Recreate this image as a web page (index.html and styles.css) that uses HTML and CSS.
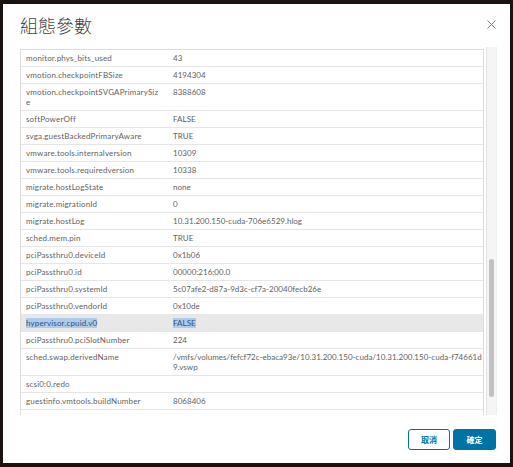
FILE: index.html
```html
<!DOCTYPE html>
<html lang="zh-Hant">
<head>
<meta charset="utf-8">
<title>組態參數</title>
<link rel="stylesheet" href="styles.css">
</head>
<body>
<div class="modal">
  <div class="header">
    <h1 class="title">組態參數</h1>
    <button class="close" aria-label="close">
      <svg width="9" height="9" viewBox="0 0 9 9"><path d="M0.5 0.5 L8.5 8.5 M8.5 0.5 L0.5 8.5" stroke="#7a7a7a" stroke-width="1" fill="none"/></svg>
    </button>
  </div>
  <div class="content">
    <div class="grid">
      <div class="row"><div class="k">monitor.phys_bits_used</div><div class="v">43</div></div>
      <div class="row"><div class="k">vmotion.checkpointFBSize</div><div class="v">4194304</div></div>
      <div class="row"><div class="k">vmotion.checkpointSVGAPrimarySize</div><div class="v">8388608</div></div>
      <div class="row"><div class="k">softPowerOff</div><div class="v">FALSE</div></div>
      <div class="row"><div class="k">svga.guestBackedPrimaryAware</div><div class="v">TRUE</div></div>
      <div class="row"><div class="k">vmware.tools.internalversion</div><div class="v">10309</div></div>
      <div class="row"><div class="k">vmware.tools.requiredversion</div><div class="v">10338</div></div>
      <div class="row"><div class="k">migrate.hostLogState</div><div class="v">none</div></div>
      <div class="row"><div class="k">migrate.migrationId</div><div class="v">0</div></div>
      <div class="row"><div class="k">migrate.hostLog</div><div class="v">10.31.200.150-cuda-706e6529.hlog</div></div>
      <div class="row"><div class="k">sched.mem.pin</div><div class="v">TRUE</div></div>
      <div class="row"><div class="k">pciPassthru0.deviceId</div><div class="v">0x1b06</div></div>
      <div class="row"><div class="k">pciPassthru0.id</div><div class="v">00000:216:00.0</div></div>
      <div class="row"><div class="k">pciPassthru0.systemId</div><div class="v">5c07afe2-d87a-9d3c-cf7a-20040fecb26e</div></div>
      <div class="row"><div class="k">pciPassthru0.vendorId</div><div class="v">0x10de</div></div>
      <div class="row selected"><div class="k"><span class="hl">hypervisor.cpuid.v0</span></div><div class="v"><span class="hl">FALSE</span></div></div>
      <div class="row"><div class="k">pciPassthru0.pciSlotNumber</div><div class="v">224</div></div>
      <div class="row"><div class="k">sched.swap.derivedName</div><div class="v">/vmfs/volumes/fefcf72c-ebaca93e/10.31.200.150-cuda/10.31.200.150-cuda-f74661d9.vswp</div></div>
      <div class="row"><div class="k">scsi0:0.redo</div><div class="v"></div></div>
      <div class="row"><div class="k">guestinfo.vmtools.buildNumber</div><div class="v">8068406</div></div>
    </div>
    <div class="track"><div class="thumb"></div></div>
  </div>
  <div class="footer">
    <button class="btn btn-outline">取消</button>
    <button class="btn btn-primary">確定</button>
  </div>
</div>
</body>
</html>
```
FILE: styles.css
```css
* { box-sizing: border-box; }
html, body { margin: 0; height: 467px; overflow: hidden; }
body {
  background: #1b1310;
  padding: 4px 3px 4px 3px;
  font-family: "Lato", "Noto Sans CJK TC", sans-serif;
}
.modal {
  width: 507px;
  height: 459px;
  background: #fff;
  display: flex;
  flex-direction: column;
}
.header {
  height: 45px;
  display: flex;
  justify-content: space-between;
  align-items: flex-start;
  padding: 9px 14px 0 17px;
}
.title {
  margin: 0;
  font-family: "Noto Sans CJK TC", sans-serif;
  font-weight: 300;
  font-size: 18px;
  line-height: 24px;
  color: #444;
}
.close {
  border: 0;
  background: none;
  padding: 0;
  margin-top: 7px;
  width: 9px;
  height: 9px;
  display: flex;
}
.content {
  display: flex;
  height: 367px;
  padding-left: 17px;
  gap: 2px;
}
.grid {
  width: 464px;
  height: 366px;
  overflow: hidden;
  border: 1px solid #dcdcdc;
  border-bottom: 0;
  font-size: 8px;
  line-height: 10px;
  letter-spacing: 0.16px;
  color: #5f5f5f;
}
.row {
  display: grid;
  grid-template-columns: 147px 1fr;
  border-bottom: 1px solid #e6e6e6;
}
.k, .v {
  padding: 3px 6px 3px 5px;
  word-break: break-all;
}
.v { padding-right: 1px; letter-spacing: 0.02px; }
.selected { background: #e8e8e8; }
.hl { background: #aecbec; color: #35507a; }
.track {
  width: 11px;
  height: 368px;
  margin-top: -2px;
  background: #f5f5f5;
  border-left: 1px solid #e4e4e4;
  border-right: 1px solid #eeeeee;
  padding-top: 212px;
  padding-left: 2px;
}
.thumb {
  width: 5px;
  height: 138px;
  background: #c1c1c1;
  border-radius: 3px;
}
.footer {
  flex: 1;
  display: flex;
  justify-content: flex-end;
  align-items: flex-start;
  padding: 13px 14px 0 0;
  gap: 3px;
}
.btn {
  height: 21px;
  padding: 0;
  font-family: "Noto Sans CJK TC", sans-serif;
  font-size: 8px;
  font-weight: 700;
  border-radius: 3px;
  border: 1px solid #0072a3;
}
.btn-outline { width: 42px; background: #fff; color: #0072a3; }
.btn-primary { width: 43px; background: #0072a3; color: #fff; }
```
